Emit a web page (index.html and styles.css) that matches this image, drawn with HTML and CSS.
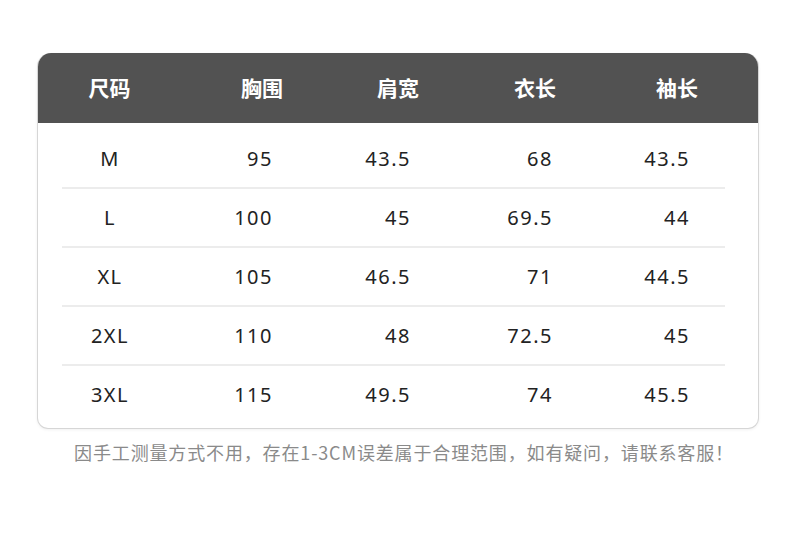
FILE: index.html
```html
<!DOCTYPE html>
<html lang="zh">
<head>
<meta charset="utf-8">
<title>尺码表</title>
<link rel="stylesheet" href="styles.css">
</head>
<body>
<div class="page">
  <div class="card">
    <div class="head">
      <div>尺码</div><div>胸围</div><div>肩宽</div><div>衣长</div><div>袖长</div>
    </div>
    <div class="body">
      <div class="row"><div class="size">M</div><div>95</div><div>43.5</div><div>68</div><div>43.5</div></div>
      <div class="row"><div class="size">L</div><div>100</div><div>45</div><div>69.5</div><div>44</div></div>
      <div class="row"><div class="size">XL</div><div>105</div><div>46.5</div><div>71</div><div>44.5</div></div>
      <div class="row"><div class="size">2XL</div><div>110</div><div>48</div><div>72.5</div><div>45</div></div>
      <div class="row"><div class="size">3XL</div><div>115</div><div>49.5</div><div>74</div><div>45.5</div></div>
    </div>
  </div>
  <p class="note">因手工测量方式不用，存在1-3CM误差属于合理范围，如有疑问，请联系客服！</p>
</div>
</body>
</html>
```

FILE: styles.css
```css
html, body {
  margin: 0;
  padding: 0;
  background: #ffffff;
}
body {
  font-family: "Noto Sans", "Noto Sans CJK SC", sans-serif;
}
.page {
  padding: 53px 0 0 37px;
  width: 722px;
}
.card {
  width: 720px;
  border: 1px solid #d6d6d6;
  border-top: none;
  border-radius: 14px 14px 11px 11px;
  box-shadow: 0 1px 3px rgba(0,0,0,0.06);
  overflow: hidden;
}
.head {
  height: 70px;
  background: #525252;
  display: grid;
  grid-template-columns: 145px 160px 112px 162px 122px;
  align-items: center;
  color: #ffffff;
  font-family: "Noto Sans CJK SC", sans-serif;
  font-weight: 700;
  font-size: 21px;
  margin: 0 -1px;
}
.head > div {
  text-align: center;
  line-height: 1;
  padding-bottom: 2px;
}
.body {
  padding: 7px 0 5px;
}
.row {
  margin: 0 33px 0 24px;
  height: 57px;
  border-bottom: 2px solid #ececec;
  display: grid;
  grid-template-columns: 96px 115px 138px 142px 137px;
  align-items: center;
  color: #222222;
  font-size: 20px;
  letter-spacing: 1.5px;
}
.row:last-child {
  border-bottom: none;
}
.row > div {
  text-align: right;
  line-height: 1;
}
.row > .size {
  text-align: center;
}
.note {
  margin: 11px 0 0;
  padding-left: 12px;
  text-align: center;
  font-family: "Noto Sans CJK SC", sans-serif;
  font-size: 18px;
  letter-spacing: 0.85px;
  color: #8a8a8a;
  line-height: 24px;
}
```
